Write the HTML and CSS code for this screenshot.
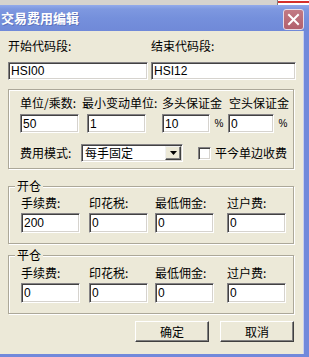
FILE: index.html
```html
<!DOCTYPE html>
<html lang="zh-CN">
<head>
  <meta charset="UTF-8">
  <title>交易费用编辑</title>
  <link rel="stylesheet" href="styles.css">
</head>
<body>
  <!-- strip of the desktop behind the dialog -->
  <div class="desk-top"><span class="behind"></span></div>

  <div class="window">
    <div class="titlebar">
      <span class="title">交易费用编辑</span>
      <button class="close" type="button" aria-label="关闭">
        <svg width="13" height="13" viewBox="0 0 13 13">
          <path d="M2 2 L11 11 M11 2 L2 11" stroke="#fff" stroke-width="2" stroke-linecap="square"/>
        </svg>
      </button>
    </div>

    <div class="client">
      <!-- code range -->
      <div class="code-row">
        <div class="code-field first">
          <label class="lbl">开始代码段:</label>
          <input class="edit" type="text" value="HSI00">
        </div>
        <div class="code-field second">
          <label class="lbl">结束代码段:</label>
          <input class="edit" type="text" value="HSI12">
        </div>
      </div>

      <!-- unit / margin settings -->
      <div class="group units">
        <div class="row labels">
          <span class="lbl w-unit">单位/乘数:</span>
          <span class="lbl w-tick">最小变动单位:</span>
          <span class="lbl w-long">多头保证金</span>
          <span class="lbl">空头保证金</span>
        </div>
        <div class="row inputs">
          <input class="edit e-unit" type="text" value="50">
          <input class="edit e-tick" type="text" value="1">
          <input class="edit e-long" type="text" value="10">
          <span class="pct">%</span>
          <input class="edit e-short" type="text" value="0">
          <span class="pct">%</span>
        </div>
        <div class="row mode">
          <span class="lbl w-mode">费用模式:</span>
          <div class="combo">
            <span class="combo-text">每手固定</span>
            <span class="combo-btn">
              <svg width="7" height="4" viewBox="0 0 7 4"><path d="M0 0 H7 L3.5 4 Z" fill="#000"/></svg>
            </span>
          </div>
          <span class="check"></span>
          <span class="lbl check-lbl">平今单边收费</span>
        </div>
      </div>

      <!-- open position fees -->
      <fieldset class="group fees open">
        <legend>开仓</legend>
        <div class="fee-grid">
          <span class="lbl">手续费:</span>
          <span class="lbl">印花税:</span>
          <span class="lbl">最低佣金:</span>
          <span class="lbl">过户费:</span>
          <input class="edit" type="text" value="200">
          <input class="edit" type="text" value="0">
          <input class="edit" type="text" value="0">
          <input class="edit" type="text" value="0">
        </div>
      </fieldset>

      <!-- close position fees -->
      <fieldset class="group fees close-pos">
        <legend>平仓</legend>
        <div class="fee-grid">
          <span class="lbl">手续费:</span>
          <span class="lbl">印花税:</span>
          <span class="lbl">最低佣金:</span>
          <span class="lbl">过户费:</span>
          <input class="edit" type="text" value="0">
          <input class="edit" type="text" value="0">
          <input class="edit" type="text" value="0">
          <input class="edit" type="text" value="0">
        </div>
      </fieldset>

      <div class="actions">
        <button class="btn ok" type="button">确定</button>
        <button class="btn cancel" type="button">取消</button>
      </div>
    </div>
  </div>
</body>
</html>
```

FILE: styles.css
```css
body {
  margin: 0;
  width: 309px;
  height: 357px;
  overflow: hidden;
  background-color: #d6d3ce;
  font-family: "Noto Sans CJK SC", "Liberation Sans", sans-serif;
  font-size: 12px;
  color: #000;
}
/* desktop strip above the dialog */
.desk-top {
  height: 5px;
  display: flex;
  justify-content: flex-end;
  background-color: #d6d3ce;
}
.behind {
  width: 31px;
  height: 5px;
  border-left: 1px solid #808080;
  background: linear-gradient(#fff 0, #fff 1px, #d4302c 1px, #d4302c 3px, #fff 3px);
}
.window {
  width: 309px;
  height: 352px;
  display: flex;
  flex-direction: column;
}
.titlebar {
  height: 26px;
  display: flex;
  align-items: flex-start;
  justify-content: space-between;
  background: linear-gradient(#93aaeb 0, #7e98e0 4px, #7590dc 50%, #7089d8 100%);
}
.title {
  margin: 4px 0 0 1px;
  line-height: 18px;
  font-size: 13px;
  font-weight: bold;
  color: #fff;
  text-shadow: 1px 1px 0 #5f74bd;
}
.close {
  width: 21px;
  height: 21px;
  margin: 4px 5px 0 0;
  padding: 0;
  display: flex;
  align-items: center;
  justify-content: center;
  background: linear-gradient(#c27a84, #b2606d);
  border: 1px solid #e6dbe6;
  border-radius: 3px;
}
.client {
  flex: 1;
  box-sizing: border-box;
  padding: 8px 10px 0 8px;
  background-color: #ece9d8;
  border-right: 5px solid #7189db;
  border-bottom: 3px solid #7189db;
  box-shadow: inset -1px 0 0 #c7cff0;
}
.lbl {
  display: block;
  line-height: 14px;
  white-space: nowrap;
}
/* sunken edit box */
.edit {
  box-sizing: border-box;
  height: 20px;
  margin: 0;
  padding: 0 2px;
  font-family: "Liberation Sans", sans-serif;
  font-size: 12px;
  color: #000;
  background: #fff;
  border: 1px solid;
  border-color: #848284 #fff #fff #848284;
  box-shadow: inset 1px 1px 0 #424142, inset -1px -1px 0 #d6d3ce;
  outline: none;
}
.code-row {
  display: flex;
  gap: 3px;
}
.code-field .lbl {
  margin-bottom: 8px;
}
.code-field .edit {
  height: 18px;
}
.code-field.first .edit { width: 140px; }
.code-field.second .edit { width: 145px; }

/* etched group box */
.group {
  box-sizing: border-box;
  width: 286px;
  margin: 0;
  border: 1px solid #aca899;
  box-shadow: inset 1px 1px 0 #fff, 1px 1px 0 #fff;
}
.units {
  margin-top: 9px;
  height: 80px;
  padding: 6px 0 0 11px;
}
.row {
  display: flex;
  align-items: center;
}
.w-unit { width: 62px; }
.w-tick { width: 80px; }
.w-long { width: 67px; }
.inputs {
  margin-top: 4px;
}
.inputs .edit { height: 19px; }
.e-unit { width: 59px; margin-right: 8px; }
.e-tick { width: 59px; margin-right: 16px; }
.e-long { width: 48px; }
.e-short { width: 46px; }
.pct {
  width: 18px;
  text-align: center;
  font-family: "Liberation Sans", sans-serif;
  font-size: 10px;
}
.mode {
  margin-top: 11px;
}
.w-mode { width: 61px; }
.combo {
  box-sizing: border-box;
  width: 102px;
  height: 18px;
  display: flex;
  align-items: center;
  background: #fff;
  border: 1px solid;
  border-color: #848284 #fff #fff #848284;
  box-shadow: inset 1px 1px 0 #424142, inset -1px -1px 0 #d6d3ce;
  padding: 1px;
}
.combo-text {
  flex: 1;
  padding-left: 2px;
  line-height: 14px;
}
.combo-btn {
  box-sizing: border-box;
  width: 16px;
  height: 14px;
  display: flex;
  align-items: center;
  justify-content: center;
  background: #ece9d8;
  border: 1px solid;
  border-color: #f0f0f0 #404040 #404040 #f0f0f0;
  box-shadow: inset -1px -1px 0 #808080;
}
.check {
  box-sizing: border-box;
  width: 13px;
  height: 13px;
  margin-left: 15px;
  background: #fff;
  border: 1px solid;
  border-color: #848284 #fff #fff #848284;
  box-shadow: inset 1px 1px 0 #424142, inset -1px -1px 0 #d6d3ce;
}
.check-lbl {
  margin-left: 4px;
}

/* fee groups */
.fees {
  padding: 3px 0 10px 12px;
}
.fees legend {
  margin-left: -6px;
  padding: 0 2px;
  line-height: 14px;
  background: #ece9d8;
}
.open {
  margin-top: 10px;
}
.close-pos {
  margin-top: 4px;
  padding-top: 4px;
}
.fee-grid {
  display: grid;
  grid-template-columns: 68px 66px 72px 59px;
  row-gap: 3px;
}
.fee-grid .edit {
  width: 59px;
}
.actions {
  display: flex;
  justify-content: flex-end;
  gap: 11px;
  margin-top: 7px;
  padding-right: 0;
}
.btn {
  box-sizing: border-box;
  width: 74px;
  height: 21px;
  padding: 0;
  font-family: "Noto Sans CJK SC", sans-serif;
  font-size: 12px;
  color: #000;
  background: #ece9d8;
  border: 1px solid;
  border-color: #fff #404040 #404040 #fff;
  box-shadow: inset -1px -1px 0 #808080;
}
```
